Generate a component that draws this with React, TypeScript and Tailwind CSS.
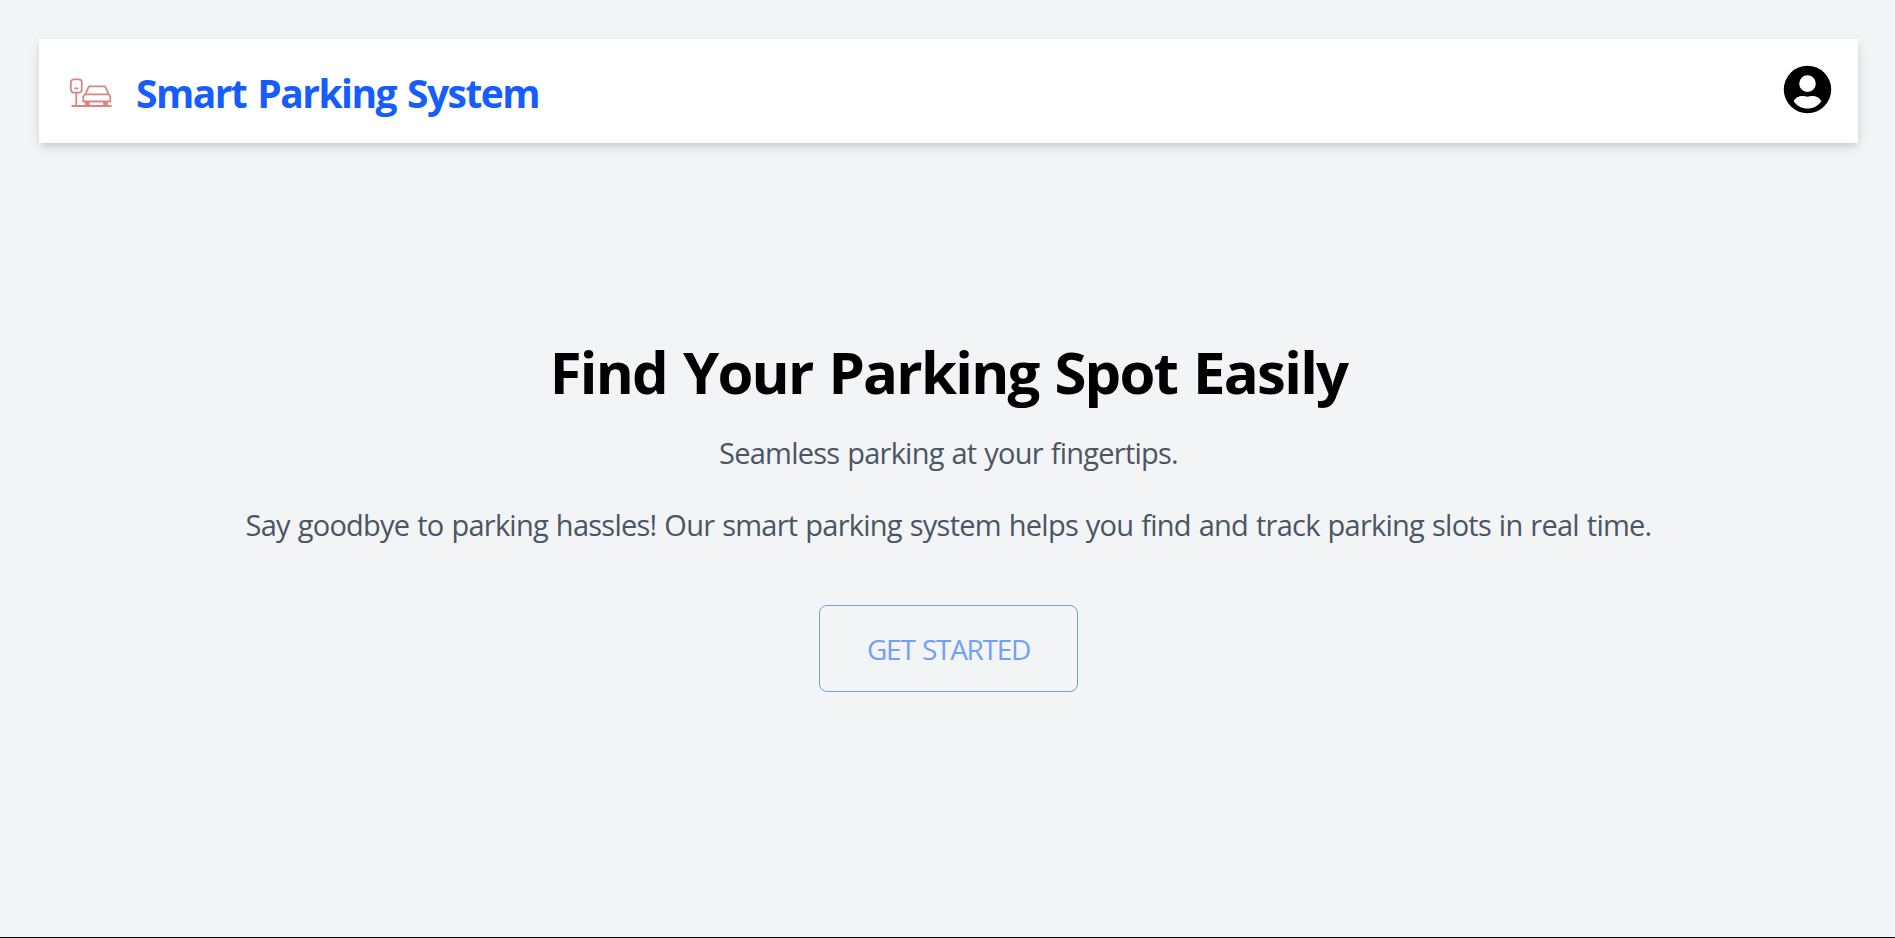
export default function App() {
  return (
    <div className="flex h-[938px] flex-col border-b border-black bg-gray-100 px-[39px] pt-[39px] font-['Open_Sans','Noto_Sans',sans-serif]">
      <header className="flex h-[104px] w-[1819px] shrink-0 items-center bg-white pr-[22px] pl-[29px] shadow-[0_5px_12px_-1px_rgb(0_0_0/0.12),0_3px_6px_-2px_rgb(0_0_0/0.12)]">
        <svg className="mt-1.5 h-[34px] w-[46px]" viewBox="0 0 46 34" fill="none" stroke="#db8581" strokeWidth="1.8">
          <rect x="2.8" y="2.3" width="11" height="13.4" rx="3.2" />
          <path d="M6.3 11.3h4M8.300 16v13M3.500 29h40" />
          <path d="M15.200 24.500v-5l2-2.200l3.700-8h16.200l3.700 8l1.500 2.200v5zM17.200 17.300h23.600" strokeLinejoin="round" />
          <path d="M17.800 25h3V29h-3zM36 25h3V29H36z" fill="#db8581" />
        </svg>
        <h1 className="mt-[2px] ml-[22px] text-[39px] leading-none font-bold tracking-[-1.55px] whitespace-nowrap text-[#155dfc] [word-spacing:2.5px]">Smart Parking System</h1>
        <svg className="mb-[3px] ml-auto size-[57px]" viewBox="0 0 24 24">
          <path fillRule="evenodd" d="M12 2a10 10 0 1 0 0 20a10 10 0 1 0 0-20zM12 6a3.5 3.5 0 1 1 0 7a3.500 3.500 0 1 1 0-7zM12 20c-2.500 0-4.600-1.200-5.800-3.100C7 15 9.500 14.200 12 15c2.500-.8 5 0 5.800 1.900C16.600 18.800 14.500 20 12 20z" />
        </svg>
      </header>
      <main className="flex w-[1819px] flex-col items-center">
        <h2 className="mt-[194px] text-[58px] leading-[70px] font-bold tracking-[-1.75px] whitespace-nowrap text-black [word-spacing:2.6px]">Find Your Parking Spot Easily</h2>
        <p className="mt-[24px] text-[29px] leading-[44px] tracking-[-0.75px] whitespace-nowrap text-[#4a5565] [word-spacing:1px]">Seamless parking at your fingertips.</p>
        <p className="mt-[28px] text-[29px] leading-[44px] tracking-[-0.75px] whitespace-nowrap text-[#4a5565] [word-spacing:1.1px]">Say goodbye to parking hassles! Our smart parking system helps you find and track parking slots in real time.</p>
        <button className="mt-[58px] h-[87px] w-[259px] rounded-lg border border-[#719ffb] text-[28px] tracking-[-1.3px] text-[#719ffb] [word-spacing:1.5px]">GET STARTED</button>
      </main>
    </div>
  );
}
